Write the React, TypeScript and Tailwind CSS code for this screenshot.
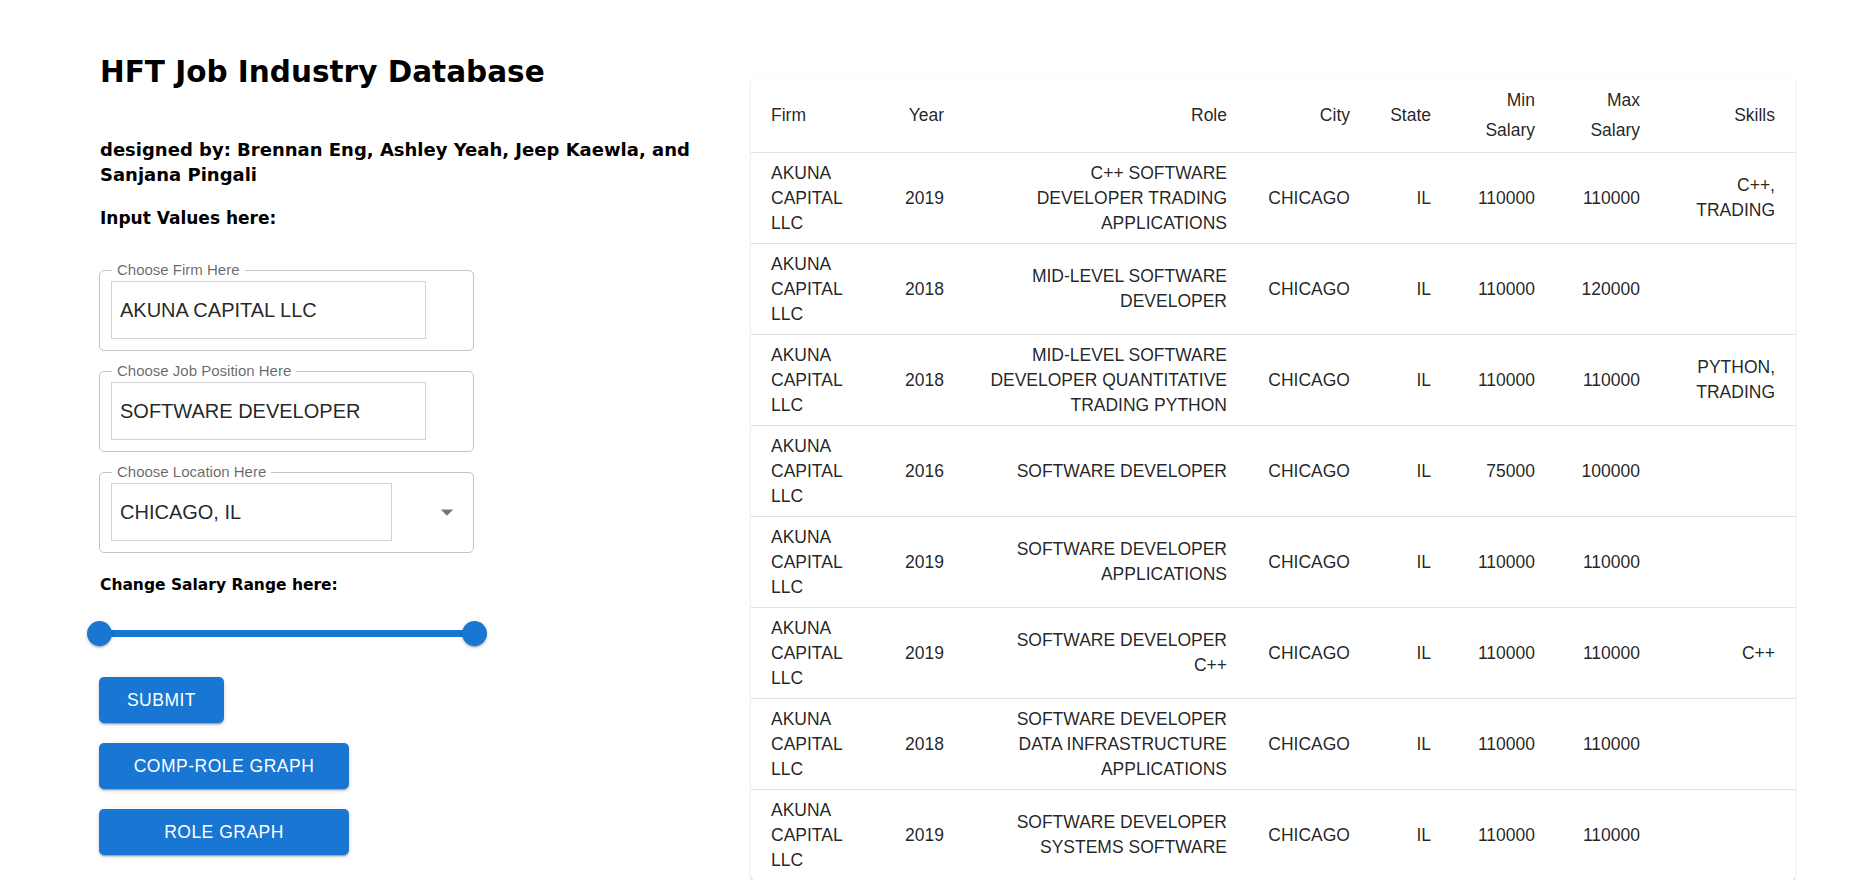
import React from "react";

type Row = {
  firm: string;
  year: string;
  role: string;
  city: string;
  state: string;
  min: string;
  max: string;
  skills: string;
};

const rows: Row[] = [
  { firm: "AKUNA CAPITAL LLC", year: "2019", role: "C++ SOFTWARE DEVELOPER TRADING APPLICATIONS", city: "CHICAGO", state: "IL", min: "110000", max: "110000", skills: "C++, TRADING" },
  { firm: "AKUNA CAPITAL LLC", year: "2018", role: "MID-LEVEL SOFTWARE DEVELOPER", city: "CHICAGO", state: "IL", min: "110000", max: "120000", skills: "" },
  { firm: "AKUNA CAPITAL LLC", year: "2018", role: "MID-LEVEL SOFTWARE DEVELOPER QUANTITATIVE TRADING PYTHON", city: "CHICAGO", state: "IL", min: "110000", max: "110000", skills: "PYTHON, TRADING" },
  { firm: "AKUNA CAPITAL LLC", year: "2016", role: "SOFTWARE DEVELOPER", city: "CHICAGO", state: "IL", min: "75000", max: "100000", skills: "" },
  { firm: "AKUNA CAPITAL LLC", year: "2019", role: "SOFTWARE DEVELOPER APPLICATIONS", city: "CHICAGO", state: "IL", min: "110000", max: "110000", skills: "" },
  { firm: "AKUNA CAPITAL LLC", year: "2019", role: "SOFTWARE DEVELOPER C++", city: "CHICAGO", state: "IL", min: "110000", max: "110000", skills: "C++" },
  { firm: "AKUNA CAPITAL LLC", year: "2018", role: "SOFTWARE DEVELOPER DATA INFRASTRUCTURE APPLICATIONS", city: "CHICAGO", state: "IL", min: "110000", max: "110000", skills: "" },
  { firm: "AKUNA CAPITAL LLC", year: "2019", role: "SOFTWARE DEVELOPER SYSTEMS SOFTWARE", city: "CHICAGO", state: "IL", min: "110000", max: "110000", skills: "" },
];

function Field({ label, value, select }: { label: string; value: string; select?: boolean }) {
  return (
    <div className="relative h-[81px] w-[375px] rounded-[5px] border border-[#c4c4c4] pl-[11px] pt-[10px]">
      <span className="absolute -top-[10px] left-[12px] bg-white px-[5px] text-[15px] leading-[18px] text-[rgba(0,0,0,0.6)]">
        {label}
      </span>
      <div className="flex items-center">
        <div
          className={
            select
              ? "flex h-[58px] w-[281px] items-center border border-[#d3d3d3] pl-[8px] text-[20px] text-[rgba(0,0,0,0.87)]"
              : "flex h-[58px] w-[315px] items-center border border-[#d3d3d3] pl-[8px] text-[20px] text-[rgba(0,0,0,0.87)]"
          }
        >
          {value}
        </div>
        {select && (
          <svg viewBox="0 0 24 24" className="ml-[40px] h-[30px] w-[30px] fill-[rgba(0,0,0,0.54)]">
            <path d="M7 10l5 5 5-5z" />
          </svg>
        )}
      </div>
    </div>
  );
}

function Btn({ children, w }: { children: React.ReactNode; w: string }) {
  return (
    <button
      className={`${w} h-[46px] rounded-[5px] bg-[#1976d2] text-[17.5px] uppercase tracking-[0.5px] text-white shadow-[0px_3px_1px_-2px_rgba(0,0,0,0.2),0px_2px_2px_0px_rgba(0,0,0,0.14),0px_1px_5px_0px_rgba(0,0,0,0.12)]`}
    >
      {children}
    </button>
  );
}

const thumb =
  "absolute top-0 h-[25px] w-[25px] rounded-full bg-[#1976d2] shadow-[0px_3px_1px_-2px_rgba(0,0,0,0.2),0px_2px_2px_0px_rgba(0,0,0,0.14),0px_1px_5px_0px_rgba(0,0,0,0.12)]";

export default function App() {
  return (
    <div className="flex min-h-screen w-full items-start bg-white font-['Liberation_Sans',Arial,sans-serif]">
      {/* left panel */}
      <div className="flex w-[751px] shrink-0 flex-col pl-[99px] pt-[52px] font-['DejaVu_Sans',sans-serif] text-black">
        <h1 className="pl-[1px] text-[29.5px] font-bold leading-[40px]">HFT Job Industry Database</h1>
        <h3 className="mt-[45px] w-[620px] pl-[1px] text-[18px] font-bold leading-[25px]">
          designed by: Brennan Eng, Ashley Yeah, Jeep Kaewla, and Sanjana Pingali
        </h3>
        <h4 className="mt-[19px] pl-[1px] text-[17px] font-bold leading-[25px]">Input Values here:</h4>

        <div className="mt-[39px] flex flex-col gap-[20px] font-['Liberation_Sans',Arial,sans-serif]">
          <Field label="Choose Firm Here" value="AKUNA CAPITAL LLC" />
          <Field label="Choose Job Position Here" value="SOFTWARE DEVELOPER" />
          <Field label="Choose Location Here" value="CHICAGO, IL" select />
        </div>

        <h4 className="mt-[20px] pl-[1px] text-[15.5px] font-bold leading-[25px]">Change Salary Range here:</h4>

        <div className="relative mt-[23px] h-[25px] w-[375px]">
          <div className="absolute left-0 right-0 top-[9px] h-[7px] rounded-full bg-[#1976d2]" />
          <div className={`${thumb} -left-[12.5px]`} />
          <div className={`${thumb} -right-[12.5px]`} />
        </div>

        <div className="mt-[31px] flex flex-col items-start gap-[20px] font-['Liberation_Sans',Arial,sans-serif]">
          <Btn w="w-[125px]">Submit</Btn>
          <Btn w="w-[250px]">Comp-Role Graph</Btn>
          <Btn w="w-[250px]">Role Graph</Btn>
        </div>

        <h4 className="mt-[22px] pl-[1px] text-[17px] font-bold leading-[25px]">Skills here:</h4>
      </div>

      {/* table */}
      <div className="mt-[77px] w-[1044px] shrink-0 overflow-hidden rounded-[5px] bg-white shadow-[0px_2px_1px_-1px_rgba(0,0,0,0.2),0px_1px_1px_0px_rgba(0,0,0,0.14),0px_1px_3px_0px_rgba(0,0,0,0.12)]">
        <table className="w-full table-fixed border-collapse text-[17.5px] leading-[25px] text-[rgba(0,0,0,0.87)]">
          <colgroup>
            <col className="w-[123px]" />
            <col className="w-[100px]" />
            <col className="w-[283px]" />
            <col className="w-[123px]" />
            <col className="w-[81px]" />
            <col className="w-[104px]" />
            <col className="w-[105px]" />
            <col className="w-[125px]" />
          </colgroup>
          <thead>
            <tr className="border-b border-[#e0e0e0] text-left font-medium leading-[30px]">
              <th className="py-[7.5px] pl-[20px] pr-[28px] text-left font-medium">Firm</th>
              <th className="py-[7.5px] pl-[8px] pr-[30px] text-right font-medium">Year</th>
              <th className="py-[7.5px] pl-[9px] pr-[30px] text-right font-medium">Role</th>
              <th className="py-[7.5px] pl-[8px] pr-[30px] text-right font-medium">City</th>
              <th className="py-[7.5px] pl-[8px] pr-[30px] text-right font-medium">State</th>
              <th className="py-[7.5px] pl-[8px] pr-[30px] text-right font-medium">Min Salary</th>
              <th className="py-[7.5px] pl-[8px] pr-[30px] text-right font-medium">Max Salary</th>
              <th className="py-[7.5px] pl-[8px] pr-[20px] text-right font-medium">Skills</th>
            </tr>
          </thead>
          <tbody>
            {rows.map((r, i) => (
              <tr key={i} className="border-b border-[#e0e0e0] align-middle">
                <td className="py-[7.5px] pl-[20px] pr-[28px] text-left">{r.firm}</td>
                <td className="py-[7.5px] pl-[8px] pr-[30px] text-right">{r.year}</td>
                <td className="py-[7.5px] pl-[9px] pr-[30px] text-right">{r.role}</td>
                <td className="py-[7.5px] pl-[8px] pr-[30px] text-right">{r.city}</td>
                <td className="py-[7.5px] pl-[8px] pr-[30px] text-right">{r.state}</td>
                <td className="py-[7.5px] pl-[8px] pr-[30px] text-right">{r.min}</td>
                <td className="py-[7.5px] pl-[8px] pr-[30px] text-right">{r.max}</td>
                <td className="py-[7.5px] pl-[8px] pr-[20px] text-right">{r.skills}</td>
              </tr>
            ))}
          </tbody>
        </table>
      </div>
    </div>
  );
}
